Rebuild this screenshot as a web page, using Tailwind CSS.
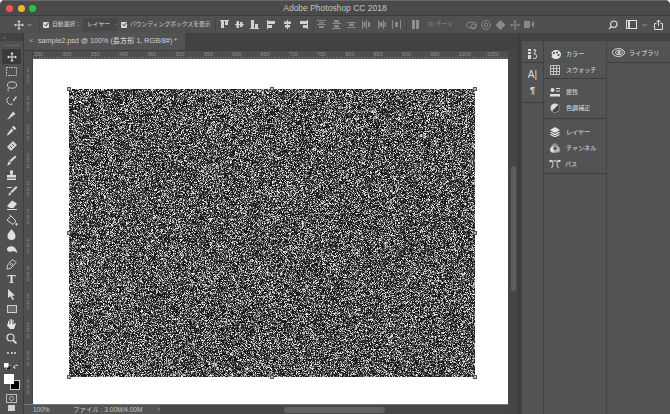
<!DOCTYPE html>
<html lang="ja">
  <head>
    <meta charset="UTF-8" />
    <script src="https://cdn.jsdelivr.net/npm/@tailwindcss/browser@4"></script>
    <title>Adobe Photoshop CC 2018</title>
  </head>
  <body class="bg-white overflow-hidden">
    <div class="w-[670px] h-[414px] flex flex-col overflow-hidden rounded-t-[5px] bg-[#535353] font-['Liberation_Sans','Noto_Sans_CJK_JP',sans-serif] text-[#c9c9c9]">
      <!-- title bar -->
      <div class="relative h-[15px] shrink-0 bg-[#4a4a4a] border-t border-[#6a6a6a] flex items-center">
        <div class="flex gap-[4.5px] pl-[6px]">
          <span class="w-[7px] h-[7px] rounded-full bg-[#f2554c]"></span>
          <span class="w-[7px] h-[7px] rounded-full bg-[#f5b52e]"></span>
          <span class="w-[7px] h-[7px] rounded-full bg-[#29c33f]"></span>
        </div>
        <div class="absolute inset-x-0 text-center text-[8.5px] leading-none text-[#c4c4c4]">Adobe Photoshop CC 2018</div>
      </div>

      <!-- options bar -->
      <div class="h-[18px] shrink-0 bg-[#505050] border-t border-[#3c3c3c] flex items-center text-[5.8px] font-medium text-[#bdbdbd]">
        <svg class="ml-[14px] w-[10px] h-[10px]" viewBox="0 0 10 10" fill="#d8d8d8"><path d="M5 0l1.600 2H5.500v2.500H8V3.400L10 5 8 6.600V5.500H5.500V8h1.100L5 10 3.400 8h1.100V5.500H2v1.100L0 5l2-1.600v1.100h2.500V2H3.400z"/></svg>
        <svg class="ml-[3px] w-[5px] h-[4px]" viewBox="0 0 5 4" fill="none" stroke="#bdbdbd" stroke-width="0.8"><path d="M0.500 1l2 2 2-2"/></svg>
        <span class="ml-[7px] w-[1px] h-[12px] bg-[#444]"></span>
        <span class="ml-[3px] w-[6px] h-[6px] rounded-[1px] bg-[#d6d6d6] flex items-center justify-center"><svg class="w-[5px] h-[5px]" viewBox="0 0 5 5" fill="none" stroke="#333" stroke-width="1"><path d="M0.700 2.500l1.300 1.400L4.300 1"/></svg></span>
        <span class="ml-[3px] w-[28px] whitespace-nowrap">自動選択：</span>
        <span class="ml-[3px] w-[34px] h-[13px] bg-[#474747] rounded-[1px] flex items-center pl-[4px] gap-[5px] whitespace-nowrap">レイヤー<svg class="w-[4px] h-[3px]" viewBox="0 0 5 4" fill="none" stroke="#bdbdbd" stroke-width="0.8"><path d="M0.500 1l2 2 2-2"/></svg></span>
        <span class="ml-[4px] w-[6px] h-[6px] rounded-[1px] bg-[#d6d6d6] flex items-center justify-center"><svg class="w-[5px] h-[5px]" viewBox="0 0 5 5" fill="none" stroke="#333" stroke-width="1"><path d="M0.700 2.500l1.300 1.400L4.300 1"/></svg></span>
        <span class="ml-[3px] w-[82px] whitespace-nowrap">バウンディングボックスを表示</span>
        <span class="ml-[3px] w-[1px] h-[12px] bg-[#444]"></span>
        <!-- align -->
        <div class="flex items-center ml-[4px] gap-[6px]">
          <svg class="w-[9px] h-[9px]" viewBox="0 0 9 9" fill="#d0d0d0"><path d="M0 0h9v1H0zM1 1h3v7H1zM5 1h3v4H5z"/></svg>
          <svg class="w-[9px] h-[9px]" viewBox="0 0 9 9" fill="#d0d0d0"><path d="M0 4h9v1H0zM1.500 1h2.500v7H1.500zM5 2h2.500v5H5z"/></svg>
          <svg class="w-[9px] h-[9px]" viewBox="0 0 9 9" fill="#d0d0d0"><path d="M0 8h9v1H0zM1 0h3v8H1zM5 4h3v4H5z"/></svg>
          <svg class="ml-[2px] w-[9px] h-[9px]" viewBox="0 0 9 9" fill="#d0d0d0"><path d="M0 0h1v9H0zM1 1h7v3H1zM1 5h4v3H1z"/></svg>
          <svg class="ml-[1px] w-[9px] h-[9px]" viewBox="0 0 9 9" fill="#d0d0d0"><path d="M4 0h1v9H4zM1 1.500h7V4H1zM2 5h5v2.500H2z"/></svg>
          <svg class="ml-[1px] w-[9px] h-[9px]" viewBox="0 0 9 9" fill="#d0d0d0"><path d="M8 0h1v9H8zM1 1h7v3H1zM4 5h4v3H4z"/></svg>
        </div>
        <span class="ml-[5px] w-[1px] h-[12px] bg-[#444]"></span>
        <div class="flex items-center ml-[3px] gap-[6px] opacity-45">
          <svg class="w-[9px] h-[9px]" viewBox="0 0 9 9" fill="#d0d0d0"><path d="M0 0h9v1H0zM0 4h9v1H0zM2 2h5v1.500H2zM2 6h5v2H2z"/></svg>
          <svg class="w-[9px] h-[9px]" viewBox="0 0 9 9" fill="#d0d0d0"><path d="M0 3h9v1H0zM0 8h9v1H0zM2 0h5v2.500H2zM2 5h5v2.500H2z"/></svg>
          <svg class="w-[9px] h-[9px]" viewBox="0 0 9 9" fill="#d0d0d0"><path d="M0 2h9v1H0zM0 7h9v1H0zM2 3.500h5V6H2z"/></svg>
          <svg class="w-[9px] h-[9px]" viewBox="0 0 9 9" fill="#d0d0d0"><path d="M0 0h1v9H0zM4 0h1v9H4zM1.500 2H3.500v5h-2zM6 2h2v5H6z"/></svg>
          <svg class="w-[9px] h-[9px]" viewBox="0 0 9 9" fill="#d0d0d0"><path d="M1 0h1v9H1zM6 0h1v9H6zM2.500 2h3v5h-3zM7.500 2H9v5H7.500z"/></svg>
          <svg class="w-[9px] h-[9px]" viewBox="0 0 9 9" fill="#d0d0d0"><path d="M0 0h1v9H0zM8 0h1v9H8zM3 2h3v5H3z"/></svg>
        </div>
        <span class="ml-[5px] w-[1px] h-[12px] bg-[#444]"></span>
        <svg class="ml-[5px] w-[8px] h-[9px] opacity-50" viewBox="0 0 8 9" fill="#d0d0d0"><path d="M0 0h3v9H0zM4 0h3v9H4z"/></svg>
        <span class="ml-[7px] w-[34px] whitespace-nowrap opacity-45">3D モード：</span>
        <div class="flex items-center ml-[5px] gap-[4px] opacity-45">
          <svg class="w-[11px] h-[10px]" viewBox="0 0 11 10" fill="none" stroke="#d0d0d0"><ellipse cx="5.500" cy="5" rx="5" ry="2.800"/><circle cx="7.500" cy="6.500" r="2.500"/></svg>
          <svg class="w-[10px] h-[10px]" viewBox="0 0 10 10" fill="none" stroke="#d0d0d0"><circle cx="5" cy="5" r="4.400"/><circle cx="5" cy="5" r="1.800"/></svg>
          <svg class="w-[11px] h-[10px]" viewBox="0 0 11 10" fill="#d0d0d0"><path d="M5.500 0L8 2.500 5.500 5 3 2.500zM5.500 5L8 7.500 5.500 10 3 7.500zM3 2.500L5.500 5 3 7.500 .5 5zM8 2.500L10.500 5 8 7.500 5.500 5z"/></svg>
          <svg class="w-[10px] h-[10px]" viewBox="0 0 10 10" fill="#d0d0d0"><path d="M5 0l1.600 2H5.500v2.500H8V3.400L10 5 8 6.600V5.500H5.500V8h1.100L5 10 3.400 8h1.100V5.500H2v1.100L0 5l2-1.600v1.100h2.500V2H3.400z"/></svg>
          <svg class="w-[11px] h-[7px]" viewBox="0 0 11 7" fill="#d0d0d0"><path d="M0 0h6v7H0zM7 3l3-3v7z"/></svg>
        </div>
        <div class="ml-auto flex items-center mr-[6px]">
          <svg class="w-[10px] h-[10px]" viewBox="0 0 10 10" fill="none" stroke="#e0e0e0" stroke-width="1.200"><circle cx="5.800" cy="4.200" r="3.200"/><path d="M3.500 6.500L0.800 9.200"/></svg>
          <svg class="ml-[8px] w-[11px] h-[9px]" viewBox="0 0 11 9" fill="none" stroke="#dcdcdc"><rect x="0.500" y="0.500" width="10" height="8"/><path d="M3 1v7" stroke-width="2"/></svg>
          <svg class="ml-[5px] w-[5px] h-[4px]" viewBox="0 0 5 4" fill="none" stroke="#bdbdbd" stroke-width="0.800"><path d="M0.500 1l2 2 2-2"/></svg>
          <svg class="ml-[6px] w-[11px] h-[11px]" viewBox="0 0 11 11" fill="none" stroke="#dcdcdc"><path d="M3.500 4.500H1.500v6h8v-6H7.500M5.500 7V1M3.500 3l2-2 2 2"/></svg>
        </div>
      </div>

      <!-- workspace -->
      <div class="flex-1 min-h-0 flex bg-[#424242]">
        <!-- tool strip -->
        <div class="w-[24px] shrink-0 flex flex-col bg-[#505050] border-r border-[#3c3c3c]">
          <div class="h-[8px] bg-[#424242] text-[5px] leading-[8px] pl-[3px] text-[#888]">»</div>
          <div class="mx-[3px] mt-[1px] h-[6px] flex items-center"><span class="w-full h-[1px] bg-[#666]"></span></div>
          <div class="flex flex-col items-center pt-[1px]">
            <div class="w-[19px] h-[15px] bg-[#3a3a3a] rounded-[1px] flex items-center justify-center"><svg class="w-[10px] h-[10px]" viewBox="0 0 10 10" fill="#e4e4e4"><path d="M5 0l1.600 2H5.500v2.500H8V3.400L10 5 8 6.600V5.500H5.500V8h1.100L5 10 3.400 8h1.100V5.500H2v1.100L0 5l2-1.600v1.100h2.500V2H3.400z"/></svg></div>
            <div class="h-[14.850px] flex items-center"><svg class="w-[11px] h-[9px]" viewBox="0 0 11 9" fill="none" stroke="#cfcfcf" stroke-dasharray="1.500 1"><rect x="0.500" y="0.500" width="10" height="8"/></svg></div>
            <div class="h-[14.850px] flex items-center"><svg class="w-[11px] h-[11px]" viewBox="0 0 11 11" fill="none" stroke="#cfcfcf"><ellipse cx="6" cy="4" rx="4.500" ry="3.200"/><path d="M3 7c-2 1-1 3 0 3"/></svg></div>
            <div class="h-[14.850px] flex items-center"><svg class="w-[11px] h-[11px]" viewBox="0 0 11 11" fill="#cfcfcf"><path d="M7 4l3-4 1 1-3 4-1 .5z"/><path d="M3 1a3.500 3.500 0 1 0 3.500 7" fill="none" stroke="#cfcfcf"/></svg></div>
            <div class="h-[14.850px] flex items-center"><svg class="w-[11px] h-[11px]" viewBox="0 0 11 11" fill="#d6d6d6"><path d="M7 1.500l2.500 2.500L4 8 1 10l2-3z"/></svg></div>
            <div class="h-[14.850px] flex items-center"><svg class="w-[11px] h-[11px]" viewBox="0 0 11 11" fill="#d6d6d6"><path d="M7.500 0.500l3 3-2 1.500-2.500-2.500zM5.500 3.500l2 2L2.500 10 1 10.500l.5-2z"/></svg></div>
            <div class="h-[14.850px] flex items-center"><svg class="w-[12px] h-[12px]" viewBox="0 0 12 12" fill="#d6d6d6"><path d="M1 7l6-6 4 4-6 6z"/><path d="M4 6l2 2M6 4l2 2" stroke="#555"/></svg></div>
            <div class="h-[14.850px] flex items-center"><svg class="w-[11px] h-[11px]" viewBox="0 0 11 11" fill="#d6d6d6"><path d="M9 0.500l1.500 1.500L5 7 3.500 5.500zM3 6l2 2c-.5 1.500-2.500 2.500-4 2.500.8-1 .8-3 2-4.500z"/></svg></div>
            <div class="h-[14.850px] flex items-center"><svg class="w-[11px] h-[11px]" viewBox="0 0 11 11" fill="#e0e0e0"><path d="M4 0.500h3v2L6.500 5H10v2.500H1V5h3.500L4 2.500zM1 8.500h9V10H1z"/></svg></div>
            <div class="h-[14.850px] flex items-center"><svg class="w-[12px] h-[11px]" viewBox="0 0 12 11" fill="#d6d6d6"><path d="M10 1l1.500 1.500L6 8 4.500 6.500zM4 7l1.500 1.500c-.5 1-2 2-3.500 2 .8-.8.800-2.200 2-3.500z"/><path d="M1 2h5v1H1z"/></svg></div>
            <div class="h-[14.850px] flex items-center"><svg class="w-[12px] h-[10px]" viewBox="0 0 12 10" fill="#e0e0e0"><path d="M6 0.500l5 3-3.500 4.500H4L1 6z"/><path d="M1 9h10v1H1z"/></svg></div>
            <div class="h-[14.850px] flex items-center"><svg class="w-[12px] h-[12px]" viewBox="0 0 12 12" fill="none" stroke="#d6d6d6"><path d="M1 6l4-4 5 5-3 3.500z"/><path d="M5 2L3.500 0.500"/><path d="M10.500 9c.8 1 .8 2 0 2.500-.8-.5-.8-1.500 0-2.500z" fill="#d6d6d6"/></svg></div>
            <div class="h-[14.850px] flex items-center"><svg class="w-[9px] h-[11px]" viewBox="0 0 9 11" fill="#e0e0e0"><path d="M4.500 0C5.500 2 8.500 4 8.500 7a4 4 0 0 1-8 0C.5 4 3.500 2 4.500 0z"/></svg></div>
            <div class="h-[14.850px] flex items-center"><svg class="w-[12px] h-[9px]" viewBox="0 0 12 9" fill="#e0e0e0"><path d="M1 4c0-3 6-4 8-1 1 1 2 3 2.500 5-2-1.500-4-2-6-1.500C3 7 1 6.500 1 4z"/></svg></div>
            <div class="h-[14.850px] flex items-center"><svg class="w-[11px] h-[11px]" viewBox="0 0 11 11" fill="none" stroke="#d6d6d6"><path d="M1 10c0-3 1-5 3-7l3-2.500 3 3L7.500 6.500C6 8.500 4 10 1 10z"/><circle cx="5.500" cy="5.500" r="1"/></svg></div>
            <div class="h-[14.850px] flex items-center font-['Liberation_Serif',serif] font-bold text-[12px] leading-none text-[#e2e2e2]">T</div>
            <div class="h-[14.850px] flex items-center"><svg class="w-[9px] h-[11px]" viewBox="0 0 9 11" fill="#dcdcdc"><path d="M1 0l7 6.500-3 .2 2 3.800-1.500.5-2-3.800L1 9z"/></svg></div>
            <div class="h-[14.850px] flex items-center"><span class="w-[10px] h-[8px] border border-[#cfcfcf] bg-[#6a6a6a]"></span></div>
            <div class="h-[14.850px] flex items-center"><svg class="w-[11px] h-[12px]" viewBox="0 0 11 12" fill="#e4e4e4"><path d="M2 6V3h1v3h.5V1.500h1V6H5V1h1v5h.5V2h1v5l1.500-2 1 .5L8 11H4L1 7.500 1.500 6z"/></svg></div>
            <div class="h-[14.850px] flex items-center"><svg class="w-[11px] h-[11px]" viewBox="0 0 11 11" fill="none" stroke="#dcdcdc" stroke-width="1.200"><circle cx="4.500" cy="4.500" r="3.500"/><path d="M7 7l3.500 3.500" stroke-width="1.800"/></svg></div>
            <div class="h-[14.850px] flex items-center gap-[1.500px]"><span class="w-[2px] h-[2px] bg-[#e0e0e0] rounded-full"></span><span class="w-[2px] h-[2px] bg-[#e0e0e0] rounded-full"></span><span class="w-[2px] h-[2px] bg-[#e0e0e0] rounded-full"></span></div>
            <div class="h-[12px] flex items-center gap-[2px]">
              <svg class="w-[7px] h-[7px]" viewBox="0 0 7 7"><rect x="2.500" y="2.500" width="4.500" height="4.500" fill="#111" stroke="#ddd" stroke-width="0.500"/><rect width="4.500" height="4.500" fill="#fff"/></svg>
              <svg class="w-[6px] h-[6px]" viewBox="0 0 6 6" fill="none" stroke="#ddd"><path d="M1 4c0-2 1-3 3-3M1 2.500L1 4l1.500 0M4 1l1 1"/></svg>
            </div>
            <!-- foreground / background swatch -->
            <div class="relative w-[16px] h-[16px] mt-[1px]">
              <span class="absolute right-0 bottom-0 w-[10px] h-[10px] bg-black border border-[#ccc]"></span>
              <span class="absolute left-0 top-0 w-[10px] h-[10px] bg-white"></span>
            </div>
            <div class="mt-[4px] w-[11px] h-[9px] border border-[#bbb] flex items-center justify-center"><span class="w-[5px] h-[5px] rounded-full border border-[#bbb]"></span></div>
            <div class="mt-[2px] w-[7px] h-[6px] rounded-t-[1px] bg-[#cfcfcf]"></div>
          </div>
        </div>

        <!-- document column -->
        <div class="w-[496px] shrink-0 flex flex-col min-h-0 border-r-2 border-[#3c3c3c]">
          <!-- tab -->
          <div class="h-[17px] shrink-0 bg-[#424242] flex">
            <div class="w-[161px] bg-[#535353] flex items-center pl-[5px] text-[7.200px] font-medium whitespace-nowrap text-[#cfcfcf]">
              <span class="w-[9px] text-[#a8a8a8]">×</span>sample2.psd @ 100% (長方形 1, RGB/8#) *
            </div>
          </div>
          <div class="flex-1 min-h-0 flex">
            <div class="flex-1 min-w-0 flex flex-col">
              <!-- horizontal ruler -->
              <div class="h-[9px] shrink-0 flex bg-[#4f4f4f] border-t border-[#3e3e3e]">
                <div class="w-[9px] shrink-0 bg-[#4f4f4f] border-r border-[#444]"></div>
                <div class="flex-1 flex text-[5.500px] leading-[7px] text-[#8e8e8e] bg-[repeating-linear-gradient(90deg,#6d6d6d_0,#6d6d6d_1px,transparent_1px,transparent_2.830px)] bg-[length:100%_2px] bg-bottom bg-no-repeat">
                  <span class="w-[28.300px] pl-[1px]">250</span><span class="w-[28.300px] pl-[1px]">300</span><span class="w-[28.300px] pl-[1px]">350</span><span class="w-[28.300px] pl-[1px]">400</span><span class="w-[28.300px] pl-[1px]">450</span><span class="w-[28.300px] pl-[1px]">500</span><span class="w-[28.300px] pl-[1px]">550</span><span class="w-[28.300px] pl-[1px]">600</span><span class="w-[28.300px] pl-[1px]">650</span><span class="w-[28.300px] pl-[1px]">700</span><span class="w-[28.300px] pl-[1px]">750</span><span class="w-[28.300px] pl-[1px]">800</span><span class="w-[28.300px] pl-[1px]">850</span><span class="w-[28.300px] pl-[1px]">900</span><span class="w-[28.300px] pl-[1px]">950</span><span class="w-[28.300px] pl-[1px]">1000</span><span class="w-[28.300px] pl-[1px]">1050</span>
                </div>
              </div>
              <div class="flex-1 min-h-0 flex">
                <!-- vertical ruler -->
                <div class="w-[9px] shrink-0 bg-[#4f4f4f] border-r border-[#444] flex flex-col items-center pt-[9px] text-[5px] leading-[5.500px] text-[#8e8e8e] text-center overflow-hidden">
                  <span class="h-[28.300px] shrink-0">1<br />0<br />0</span><span class="h-[28.300px] shrink-0">1<br />5<br />0</span><span class="h-[28.300px] shrink-0">2<br />0<br />0</span><span class="h-[28.300px] shrink-0">2<br />5<br />0</span><span class="h-[28.300px] shrink-0">3<br />0<br />0</span><span class="h-[28.300px] shrink-0">3<br />5<br />0</span><span class="h-[28.300px] shrink-0">4<br />0<br />0</span><span class="h-[28.300px] shrink-0">4<br />5<br />0</span><span class="h-[28.300px] shrink-0">5<br />0<br />0</span><span class="h-[28.300px] shrink-0">5<br />5<br />0</span><span class="h-[28.300px] shrink-0">6<br />0<br />0</span><span class="h-[28.300px] shrink-0">6<br />5<br />0</span>
                </div>
                <!-- document -->
                <div class="flex-1 min-w-0 bg-white pl-[36px] pt-[30px] overflow-hidden">
                  <div class="relative w-[406px] h-[288px]">
                    <canvas id="noise" width="406" height="288" class="block w-[406px] h-[288px] blur-[0.3px]"></canvas>
                    <span class="absolute -left-[2px] -top-[2px] w-[4px] h-[4px] bg-[#bbb] border border-[#555]"></span>
                    <span class="absolute left-[201px] -top-[2px] w-[4px] h-[4px] bg-[#bbb] border border-[#555]"></span>
                    <span class="absolute -right-[2px] -top-[2px] w-[4px] h-[4px] bg-[#bbb] border border-[#555]"></span>
                    <span class="absolute -left-[2px] top-[142px] w-[4px] h-[4px] bg-[#bbb] border border-[#555]"></span>
                    <span class="absolute -right-[2px] top-[142px] w-[4px] h-[4px] bg-[#bbb] border border-[#555]"></span>
                    <span class="absolute -left-[2px] -bottom-[2px] w-[4px] h-[4px] bg-[#bbb] border border-[#555]"></span>
                    <span class="absolute left-[201px] -bottom-[2px] w-[4px] h-[4px] bg-[#bbb] border border-[#555]"></span>
                    <span class="absolute -right-[2px] -bottom-[2px] w-[4px] h-[4px] bg-[#bbb] border border-[#555]"></span>
                  </div>
                </div>
              </div>
              <!-- status bar -->
              <div class="h-[10px] shrink-0 flex items-center bg-[#464646] border-t border-[#777] text-[6.500px] text-[#c4c4c4]">
                <div class="w-[136px] h-full bg-[#535353] flex items-center pl-[9px]">
                  <span class="w-[40px]">100%</span>
                  <span class="w-[85px] whitespace-nowrap">ファイル : 3.00M/4.00M</span>
                  <span class="text-[#aaa]">›</span>
                </div>
                <div class="ml-[124px] w-[101px] h-[6px] rounded-full bg-[#626262]"></div>
              </div>
            </div>
            <!-- vertical scrollbar -->
            <div class="w-[10px] shrink-0 bg-[#454545] flex justify-center">
              <div class="mt-[116px] w-[5px] h-[125px] rounded-full bg-[#5e5e5e]"></div>
            </div>
          </div>
        </div>

        <!-- panel docks -->
        <div class="w-[21px] ml-[2px] shrink-0 flex flex-col bg-[#535353] text-[#dcdcdc]">
          <div class="h-[8px] bg-[#424242]"></div>
          <div class="h-[22px] border-b border-[#3e3e3e] flex items-center justify-center pt-[4px]">
            <svg class="w-[9px] h-[10px]" viewBox="0 0 9 10" fill="#dcdcdc"><path d="M0 0h3v2H0zM0 3h3v2H0zM0 6h3v4H0z"/><path d="M5 1h3L6 5c2 0 3 1 2.500 3S6 10 5 9" fill="none" stroke="#dcdcdc"/></svg>
          </div>
          <div class="h-[40px] border-b border-[#3e3e3e] flex flex-col items-center pt-[6px] gap-[4px]">
            <span class="text-[10px] leading-[12px] h-[12px]">A|</span>
            <span class="text-[9px] font-bold leading-[11px]">¶</span>
          </div>
        </div>
        <div class="w-[62px] ml-[1px] shrink-0 flex flex-col bg-[#535353] text-[6.100px] font-medium text-[#cccccc] whitespace-nowrap">
          <div class="h-[8px] bg-[#424242]"></div>
          <div class="h-[38px] border-b border-[#3e3e3e] flex flex-col pt-[5px]">
            <div class="h-[16px] flex items-center">
              <svg class="ml-[6px] w-[11px] h-[9px]" viewBox="0 0 11 9" fill="#e2e2e2"><path d="M6 0c3 0 5 2 5 4.500S9 9 6 9 .5 7 2 5.500 0 4 2 2 4 0 6 0z"/><circle cx="4" cy="3" r="1" fill="#444"/><circle cx="7" cy="2.500" r="1" fill="#444"/><circle cx="8.500" cy="5" r="1" fill="#444"/></svg>
              <span class="ml-[5px]">カラー</span>
            </div>
            <div class="h-[16px] flex items-center">
              <svg class="ml-[6px] w-[10px] h-[10px]" viewBox="0 0 10 10" fill="none" stroke="#dcdcdc" stroke-width="0.800"><path d="M.5.500h9v9h-9zM3.500.500v9M6.500.500v9M.5 3.500h9M.5 6.500h9"/></svg>
              <span class="ml-[6px]">スウォッチ</span>
            </div>
          </div>
          <div class="h-[40px] border-b border-[#3e3e3e] flex flex-col pt-[5px]">
            <div class="h-[16px] flex items-center">
              <svg class="ml-[6px] w-[10px] h-[10px]" viewBox="0 0 10 10" fill="#dcdcdc"><circle cx="2.500" cy="3" r="2"/><path d="M6 1h4v1H6zM6 3.500h4v1H6zM0 7h10v2.500H0z"/></svg>
              <span class="ml-[6px]">属性</span>
            </div>
            <div class="h-[16px] flex items-center">
              <svg class="ml-[6px] w-[10px] h-[10px]" viewBox="0 0 10 10"><circle cx="5" cy="5" r="4.500" fill="#dcdcdc"/><path d="M8 2L2 8a4.200 4.200 0 0 0 6-6z" fill="#444"/></svg>
              <span class="ml-[6px]">色調補正</span>
            </div>
          </div>
          <div class="h-[55px] border-b border-[#3e3e3e] flex flex-col pt-[5px]">
            <div class="h-[16px] flex items-center">
              <svg class="ml-[6px] w-[10px] h-[10px]" viewBox="0 0 10 10" fill="#e2e2e2"><path d="M5 0l5 3-5 3-5-3zM1.200 4.800L5 7l3.800-2.200L10 5.500 5 8.500 0 5.500zM1.200 7L5 9.200 8.800 7 10 7.700 5 10.500 0 7.700z"/></svg>
              <span class="ml-[6px]">レイヤー</span>
            </div>
            <div class="h-[16px] flex items-center">
              <svg class="ml-[6px] w-[10px] h-[10px]" viewBox="0 0 10 10"><circle cx="5" cy="3.500" r="3.200" fill="#8c8c8c"/><circle cx="3.300" cy="6.500" r="3.200" fill="#dcdcdc"/><circle cx="6.700" cy="6.500" r="3.200" fill="#b0b0b0"/><circle cx="5" cy="5.300" r="1.500" fill="#4a4a4a"/></svg>
              <span class="ml-[6px]">チャンネル</span>
            </div>
            <div class="h-[16px] flex items-center">
              <svg class="ml-[5px] w-[12px] h-[10px]" viewBox="0 0 12 10" fill="none" stroke="#dcdcdc"><path d="M2 2c3 0 2 7 0 7M10 2c-3 0-2 7 0 7M2 2h8"/><path d="M0.500 1h2v2h-2zM9.500 1h2v2h-2z" fill="#dcdcdc" stroke="none"/></svg>
              <span class="ml-[4px]">パス</span>
            </div>
          </div>
        </div>
        <div class="flex-1 ml-[1px] flex flex-col bg-[#535353] text-[6.100px] font-medium text-[#cccccc] whitespace-nowrap">
          <div class="h-[8px] bg-[#424242]"></div>
          <div class="h-[22px] border-b border-[#3e3e3e] flex items-center pt-[2px]">
            <svg class="ml-[5px] w-[13px] h-[9px]" viewBox="0 0 13 9" fill="none" stroke="#d8d8d8"><ellipse cx="6.500" cy="4.500" rx="6" ry="4"/><ellipse cx="7" cy="4.500" rx="3.500" ry="2.200"/><circle cx="7" cy="4.500" r="1" fill="#d8d8d8"/></svg>
            <span class="ml-[4px]">ライブラリ</span>
          </div>
        </div>
      </div>
    </div>
    <script>
      // grey speckle for the layer, skewed dark with a few bright pixels
      const cv = document.getElementById("noise");
      const ctx = cv.getContext("2d");
      const img = ctx.createImageData(cv.width, cv.height);
      let seed = 12345;
      const rnd = () => (seed = (seed * 16807) % 2147483647) / 2147483647;
      for (let i = 0; i < img.data.length; i += 4) {
        const v = 18 + 232 * Math.pow(rnd(), 2.2);
        img.data[i] = img.data[i + 1] = img.data[i + 2] = v;
        img.data[i + 3] = 255;
      }
      ctx.putImageData(img, 0, 0);
    </script>
  </body>
</html>
